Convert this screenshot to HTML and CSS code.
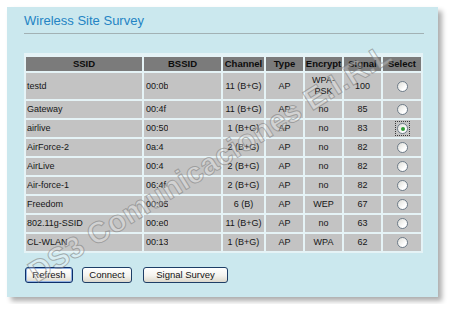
FILE: index.html
```html
<!DOCTYPE html>
<html>
<head>
<meta charset="utf-8">
<link rel="stylesheet" href="styles.css">
</head>
<body>
<div class="panel">
  <div class="title">Wireless Site Survey</div>
  <table class="survey">
    <colgroup>
      <col class="c-ssid"><col class="c-bssid"><col class="c-chan"><col class="c-type"><col class="c-enc"><col class="c-sig"><col class="c-sel">
    </colgroup>
    <tr><th>SSID</th><th>BSSID</th><th>Channel</th><th>Type</th><th>Encrypt</th><th>Signal</th><th>Select</th></tr>
    <tr class="tall"><td class="l">testd</td><td class="m"><span class="mac">00:0b</span></td><td>11 (B+G)</td><td>AP</td><td>WPA-<br>PSK</td><td>100</td><td><span class="radio"></span></td></tr>
    <tr><td class="l">Gateway</td><td class="m"><span class="mac">00:4f</span></td><td>11 (B+G)</td><td>AP</td><td>no</td><td>85</td><td><span class="radio"></span></td></tr>
    <tr><td class="l">airlive</td><td class="m"><span class="mac">00:50</span></td><td>1 (B+G)</td><td>AP</td><td>no</td><td>83</td><td><span class="focus"><span class="radio on"></span></span></td></tr>
    <tr><td class="l">AirForce-2</td><td class="m"><span class="mac">0a:4</span></td><td>2 (B+G)</td><td>AP</td><td>no</td><td>82</td><td><span class="radio"></span></td></tr>
    <tr><td class="l">AirLive</td><td class="m"><span class="mac">00:4</span></td><td>2 (B+G)</td><td>AP</td><td>no</td><td>82</td><td><span class="radio"></span></td></tr>
    <tr><td class="l">Air-force-1</td><td class="m"><span class="mac">06:4f</span></td><td>2 (B+G)</td><td>AP</td><td>no</td><td>82</td><td><span class="radio"></span></td></tr>
    <tr><td class="l">Freedom</td><td class="m"><span class="mac">00:05</span></td><td>6 (B)</td><td>AP</td><td>WEP</td><td>67</td><td><span class="radio"></span></td></tr>
    <tr><td class="l">802.11g-SSID</td><td class="m"><span class="mac">00:e0</span></td><td>11 (B+G)</td><td>AP</td><td>no</td><td>63</td><td><span class="radio"></span></td></tr>
    <tr><td class="l">CL-WLAN</td><td class="m"><span class="mac">00:13</span></td><td>1 (B+G)</td><td>AP</td><td>WPA</td><td>62</td><td><span class="radio"></span></td></tr>
  </table>
  <div class="buttons">
    <span class="btn btn-refresh default">Refresh</span>
    <span class="btn btn-connect">Connect</span>
    <span class="btn btn-survey">Signal Survey</span>
  </div>
  <div class="watermark">DS3 Comunicaciones E.I.R.L</div>
</div>
</body>
</html>
```
FILE: styles.css
```css
html, body {
  margin: 0;
  padding: 0;
  background: #ffffff;
}
body {
  font-family: "Liberation Sans", Arial, sans-serif;
}
.panel {
  position: relative;
  box-sizing: border-box;
  margin: 7px;
  width: 431px;
  height: 290px;
  padding: 6px 14px 0 17px;
  background: #cbe8ee;
  box-shadow: 4px 4px 5px rgba(0, 0, 0, 0.32);
}
.title {
  font-size: 13px;
  line-height: 16px;
  color: #2484c4;
  padding-bottom: 4px;
  border-bottom: 1px solid #a2b1b4;
}
.survey {
  margin-top: 19px;
  width: 399px;
  table-layout: fixed;
  border-collapse: separate;
  border-spacing: 2px;
  background: #e5f3f6;
  border-top: 2px solid #e5f3f6;
  font-size: 9px;
  color: #161616;
}
.c-ssid { width: 116px; }
.c-bssid { width: 77px; }
.c-chan { width: 41px; }
.c-type { width: 37px; }
.c-enc { width: 37px; }
.c-sig { width: 37px; }
.c-sel { width: 38px; }
.survey th {
  background: #7b7b7b;
  height: 14px;
  padding: 0;
  font-size: 9.5px;
  font-weight: bold;
  line-height: 14px;
  color: #0c0c0c;
  text-align: center;
  white-space: nowrap;
  overflow: hidden;
}
.survey td {
  background: #c3c3c3;
  height: 17px;
  padding: 0;
  line-height: 11px;
  text-align: center;
  vertical-align: middle;
  white-space: nowrap;
  overflow: hidden;
}
.survey tr.tall td {
  height: 26px;
}
.survey td.l {
  text-align: left;
  padding-left: 1px;
}
.survey td.m {
  text-align: left;
  padding-left: 2px;
}
.mac {
  display: inline-block;
  width: 22px;
  overflow: hidden;
  white-space: nowrap;
  vertical-align: top;
}
.radio {
  display: inline-block;
  box-sizing: border-box;
  width: 11px;
  height: 11px;
  border-radius: 50%;
  border: 1px solid #6f7d8a;
  background: linear-gradient(135deg, #deded8 0%, #ffffff 70%);
  vertical-align: middle;
  position: relative;
}
.radio.on::after {
  content: "";
  position: absolute;
  left: 2.5px;
  top: 2.5px;
  width: 4px;
  height: 4px;
  border-radius: 50%;
  background: #2f9c35;
}
.focus {
  display: inline-block;
  box-sizing: border-box;
  width: 15px;
  height: 15px;
  border: 1px dotted #3a3a3a;
  padding: 1px 0 0 1px;
  line-height: 0;
  vertical-align: middle;
}
.focus .radio {
  vertical-align: top;
}
.buttons {
  display: flex;
  margin-top: 14px;
  padding-left: 1px;
}
.btn {
  box-sizing: border-box;
  display: inline-block;
  height: 16px;
  font-size: 9.5px;
  line-height: 14px;
  text-align: center;
  color: #111111;
  border: 1px solid #1e3e66;
  border-radius: 3px;
  background: linear-gradient(to bottom, #ffffff 0%, #f4f3ee 55%, #dcd8cc 100%);
}
.btn-refresh { width: 48px; }
.btn-connect { width: 50px; margin-left: 9px; }
.btn-survey { width: 85px; margin-left: 11px; }
.btn.default {
  border-color: #0d2f6a;
  box-shadow: inset 0 0 0 1px #8fb0e0;
}
.watermark {
  position: absolute;
  left: 203px;
  top: 156px;
  transform: translate(-50%, -50%) rotate(-32deg);
  white-space: nowrap;
  font-family: "Liberation Sans", Arial, sans-serif;
  font-weight: bold;
  font-size: 30px;
  letter-spacing: 0.5px;
  color: rgba(255, 255, 255, 0.25);
  -webkit-text-stroke: 1px rgba(120, 120, 120, 0.55);
  pointer-events: none;
}
```
